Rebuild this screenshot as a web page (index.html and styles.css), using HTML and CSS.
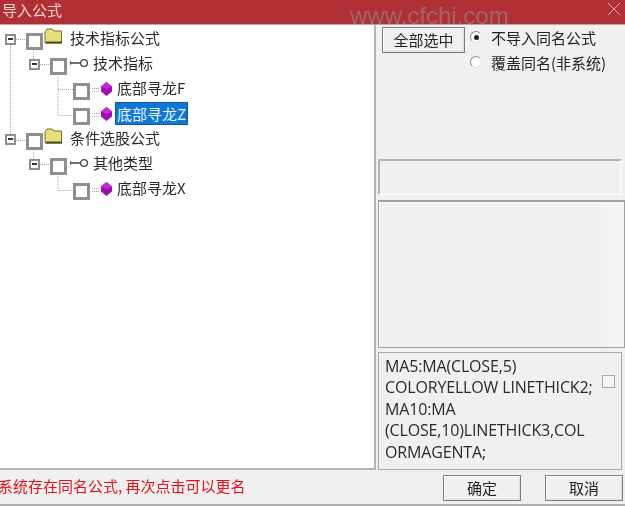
FILE: index.html
```html
<!DOCTYPE html>
<html lang="zh-CN">
<head>
<meta charset="utf-8">
<title>导入公式</title>
<link rel="stylesheet" href="styles.css">
</head>
<body>
<div class="window">
  <header class="titlebar">
    <span class="title">导入公式</span>
    <span class="watermark">www.cfchi.com</span>
    <svg class="close" width="14" height="14" viewBox="0 0 14 14"><path d="M1 1L13 13M13 1L1 13" stroke="#e2a9ab" stroke-width="1" fill="none"/></svg>
  </header>
  <main class="main">
    <section class="tree">
      <svg class="connectors" width="110" height="190" viewBox="0 0 110 190">
        <g stroke="#a8a8a8" stroke-width="1" stroke-dasharray="1 1" fill="none">
          <path d="M10.5 20V110"/>
          <path d="M16 14.5H26"/>
          <path d="M33.5 25V34"/>
          <path d="M40 39.5H50"/>
          <path d="M58 51V90.5H73"/>
          <path d="M58 64.5H73"/>
          <path d="M16 115.5H26"/>
          <path d="M33.5 125V134"/>
          <path d="M40 139.5H50"/>
          <path d="M58 151V165.5H73"/>
          <path d="M92 63.5H100M92 66.5H100M92 88.5H100M92 91.5H100M92 163.5H100M92 166.5H100"/>
        </g>
      </svg>
      <div class="row depth-0">
        <span class="expander"></span><span class="check"></span>
        <svg class="folder" width="19" height="17" viewBox="0 0 19 17"><path d="M1 4L3 1H8L10 3H17.5V15H1Z" fill="#e6e07a" stroke="#77702a"/><path d="M2 14.5H18" stroke="#4f4a1c" stroke-width="2"/></svg>
        <span class="label">技术指标公式</span>
      </div>
      <div class="row depth-1">
        <span class="expander"></span><span class="check"></span>
        <svg class="key" width="18" height="10" viewBox="0 0 18 10"><path d="M0 3V7M0 5H11" stroke="#444" stroke-width="1.3" fill="none"/><circle cx="14" cy="5" r="3.4" fill="#fff" stroke="#444" stroke-width="1.3"/></svg>
        <span class="label">技术指标</span>
      </div>
      <div class="row depth-2">
        <span class="check"></span>
        <svg class="gem" width="11" height="14" viewBox="0 0 11 14"><path d="M5.5 0L11 4.5V9.5L5.5 14L0 9.5V4.5Z" fill="#a10fb4"/><path d="M5.5 0L11 4.5L5.5 7L0 4.5Z" fill="#c62dd0"/></svg>
        <span class="label">底部寻龙F</span>
      </div>
      <div class="row depth-2">
        <span class="check"></span>
        <svg class="gem" width="11" height="14" viewBox="0 0 11 14"><path d="M5.5 0L11 4.5V9.5L5.5 14L0 9.5V4.5Z" fill="#a10fb4"/><path d="M5.5 0L11 4.5L5.5 7L0 4.5Z" fill="#c62dd0"/></svg>
        <span class="label selected">底部寻龙Z</span>
      </div>
      <div class="row depth-0">
        <span class="expander"></span><span class="check"></span>
        <svg class="folder" width="19" height="17" viewBox="0 0 19 17"><path d="M1 4L3 1H8L10 3H17.5V15H1Z" fill="#e6e07a" stroke="#77702a"/><path d="M2 14.5H18" stroke="#4f4a1c" stroke-width="2"/></svg>
        <span class="label">条件选股公式</span>
      </div>
      <div class="row depth-1">
        <span class="expander"></span><span class="check"></span>
        <svg class="key" width="18" height="10" viewBox="0 0 18 10"><path d="M0 3V7M0 5H11" stroke="#444" stroke-width="1.3" fill="none"/><circle cx="14" cy="5" r="3.4" fill="#fff" stroke="#444" stroke-width="1.3"/></svg>
        <span class="label">其他类型</span>
      </div>
      <div class="row depth-2">
        <span class="check"></span>
        <svg class="gem" width="11" height="14" viewBox="0 0 11 14"><path d="M5.5 0L11 4.5V9.5L5.5 14L0 9.5V4.5Z" fill="#a10fb4"/><path d="M5.5 0L11 4.5L5.5 7L0 4.5Z" fill="#c62dd0"/></svg>
        <span class="label">底部寻龙X</span>
      </div>
    </section>
    <aside class="side">
      <div class="options">
        <button class="btn select-all" type="button">全部选中</button>
        <div class="radios">
          <div class="radio-row"><span class="radio on"></span><span>不导入同名公式</span></div>
          <div class="radio-row"><span class="radio"></span><span>覆盖同名(非系统)</span></div>
        </div>
      </div>
      <div class="groove"></div>
      <div class="sunken"><div class="sunken-bar"></div></div>
      <div class="code">
        <p class="code-text">MA5:MA(CLOSE,5)<br>COLORYELLOW LINETHICK2;<br>MA10:MA<br>(CLOSE,10)LINETHICK3,COL<br>ORMAGENTA;</p>
        <span class="code-check"></span>
      </div>
    </aside>
  </main>
  <footer class="footer">
    <span class="status">系统存在同名公式, 再次点击可以更名</span>
    <div class="actions">
      <button class="btn action" type="button">确定</button>
      <button class="btn action" type="button">取消</button>
    </div>
  </footer>
</div>
</body>
</html>
```
FILE: styles.css
```css
* { box-sizing: border-box; }
html, body { margin: 0; padding: 0; }
body {
  width: 625px;
  height: 506px;
  overflow: hidden;
  background: #f0f0f0;
  font-family: "Noto Sans CJK SC", sans-serif;
  font-size: 15px;
  color: #222;
}
.window {
  width: 625px;
  height: 506px;
  display: flex;
  flex-direction: column;
  filter: blur(0.35px);
}
.titlebar {
  position: relative;
  flex: none;
  height: 25px;
  background: #b03036;
  border-bottom: 1px solid #c9a0a2;
  overflow: hidden;
  display: flex;
  align-items: center;
}
.title {
  font-size: 15px;
  line-height: 20px;
  padding-left: 2px;
  margin-top: -4px;
  color: #f0d7d7;
}
.watermark {
  position: absolute;
  left: 350px;
  top: 1px;
  font-family: "Liberation Sans", sans-serif;
  font-size: 24px;
  line-height: 30px;
  color: #a0656a;
  white-space: nowrap;
}
.close { position: absolute; left: 607px; top: 2px; }
.main {
  flex: none;
  height: 445px;
  display: flex;
}
.tree {
  position: relative;
  flex: none;
  width: 376px;
  padding-top: 1px;
  background: #fff;
  border-right: 2px solid #b4b4b4;
  border-bottom: 2px solid #b4b4b4;
}
.connectors { position: absolute; left: 0; top: 0; }
.row {
  position: relative;
  height: 25px;
  display: flex;
  align-items: center;
}
.depth-0 { padding-left: 5px; }
.depth-1 { padding-left: 29px; }
.depth-2 { padding-left: 73px; }
.expander {
  position: relative;
  flex: none;
  width: 11px;
  height: 11px;
  margin-right: 10px;
  margin-top: 1px;
  border: 2px solid #8e8e8e;
  background: #fff;
}
.expander::after {
  content: "";
  position: absolute;
  left: 1px;
  top: 2px;
  width: 5px;
  height: 2px;
  background: #333;
}
.check {
  flex: none;
  width: 17px;
  height: 17px;
  margin-top: 5px;
  border: 3px solid #8f8f8f;
  background: #fff;
}
.folder { flex: none; margin: -4px 0 0 1px; }
.depth-0 .label { margin-left: 7px; }
.key { flex: none; margin: -2px 0 0 3px; }
.depth-1 .label { margin-left: 5px; }
.gem { flex: none; margin: 1px 0 0 11px; }
.depth-2 .label { margin-left: 5px; }
.label {
  font-size: 15px;
  line-height: 20px;
  color: #2a2a2a;
  margin-top: -1px;
  white-space: nowrap;
}
.depth-2 .label.selected {
  margin-left: 3px;
  margin-top: 0;
  padding: 2px 2px 1px;
  background: #0f78d7;
  color: #e8f4ff;
  outline: 1px dotted #0a3a70;
  outline-offset: -1px;
}
.side {
  flex: 1;
  display: flex;
  flex-direction: column;
  padding: 1px 0 0 2px;
  min-width: 0;
}
.options {
  flex: none;
  height: 133px;
  display: flex;
  align-items: flex-start;
  padding: 1px 0 0 4px;
}
.btn {
  padding: 0;
  font: inherit;
  color: #222;
  background: #f0f0f0;
  border: 1px solid #7d7d7d;
  box-shadow: inset 1px 1px 0 #fff, inset -1px -1px 0 #dcdcdc;
}
.select-all {
  width: 83px;
  height: 26px;
  line-height: 22px;
}
.radios {
  margin-left: 5px;
  display: flex;
  flex-direction: column;
  gap: 5px;
}
.radio-row {
  height: 20px;
  display: flex;
  align-items: center;
  gap: 9px;
  white-space: nowrap;
}
.radio {
  flex: none;
  width: 12px;
  height: 12px;
  border-radius: 50%;
  border: 1px solid;
  border-color: #8c8c8c #e4e4e4 #e4e4e4 #8c8c8c;
  background: #fff;
  display: flex;
  align-items: center;
  justify-content: center;
}
.radio.on::after {
  content: "";
  width: 5px;
  height: 5px;
  border-radius: 50%;
  background: #222;
}
.groove {
  flex: none;
  width: 244px;
  height: 36px;
  border: 2px solid;
  border-color: #b4b4b4 #fafafa #fafafa #b4b4b4;
}
.sunken {
  flex: none;
  width: 247px;
  height: 148px;
  margin-top: 5px;
  border: 1px solid #a0a0a0;
  border-top-width: 2px;
  box-shadow: inset 1px 1px 0 #fff;
  display: flex;
  justify-content: flex-end;
}
.sunken-bar { width: 23px; background: #f4f3f1; }
.code {
  position: relative;
  flex: none;
  width: 244px;
  height: 118px;
  margin-top: 4px;
  padding: 3px 0 0 6px;
  border: 1px solid #a8a8a8;
  display: flex;
  font-family: "Open Sans", sans-serif;
  font-size: 16px;
  line-height: 21.4px;
}
.code-text {
  margin: 0;
  white-space: nowrap;
  letter-spacing: -0.16px;
  color: #2a2a2a;
}
.code-check {
  position: absolute;
  left: 223px;
  top: 22px;
  width: 13px;
  height: 13px;
  border: 1px solid #a8a8a8;
  background: #f4f4f4;
}
.footer {
  flex: none;
  height: 36px;
  display: flex;
  align-items: flex-start;
  justify-content: space-between;
  padding-right: 2px;
  border-bottom: 2px solid #b0b0b0;
}
.status {
  margin-left: -2px;
  margin-top: 6px;
  line-height: 20px;
  color: #e8101a;
  white-space: nowrap;
}
.actions {
  display: flex;
  gap: 24px;
  margin-top: 5px;
}
.action {
  width: 78px;
  height: 26px;
  line-height: 22px;
}
```
